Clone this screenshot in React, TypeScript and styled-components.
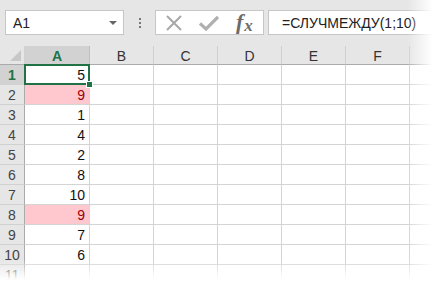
import { createGlobalStyle, styled } from 'styled-components';

const GlobalStyle = createGlobalStyle`
  html, body {
    margin: 0;
    padding: 0;
    background: #ffffff;
  }
  body {
    font-family: 'Liberation Sans', Arial, sans-serif;
  }
`;

const GREEN = '#217346';
const GRID = '#d4d4d4';

const values = [5, 9, 1, 4, 2, 8, 10, 9, 7, 6];
const dupes = [2, 8];
const columns = ['A', 'B', 'C', 'D', 'E', 'F'];

export default function App() {
  return (
    <>
      <GlobalStyle />
      <Window>
        <FormulaBar>
          <NameBox>
            <span>A1</span>
            <Caret />
          </NameBox>
          <Grip>
            <i />
            <i />
            <i />
          </Grip>
          <ButtonsBox>
            <svg width="18" height="16" viewBox="0 0 18 16">
              <path d="M2 1 L16 15 M16 1 L2 15" stroke="#a8a8a8" strokeWidth="2" fill="none" />
            </svg>
            <svg width="20" height="16" viewBox="0 0 20 16">
              <path d="M1 8.5 L7 14 L19 2" stroke="#b0b0b0" strokeWidth="3.2" fill="none" />
            </svg>
            <Fx>
              f<span>x</span>
            </Fx>
          </ButtonsBox>
          <FormulaInput>=СЛУЧМЕЖДУ(1;10)</FormulaInput>
        </FormulaBar>

        <Sheet>
          <Corner />
          {columns.map((c) => (
            <ColHead key={c} $active={c === 'A'}>
              {c}
            </ColHead>
          ))}
          <ColHead $active={false} />

          {Array.from({ length: 11 }).map((_, i) => {
            const row = i + 1;
            const v = values[i];
            return (
              <Row key={row}>
                <RowHead $active={row === 1}>{row}</RowHead>
                <Cell $bad={dupes.includes(row)} $selected={row === 1}>
                  {v}
                </Cell>
                {columns.slice(1).map((c) => (
                  <Cell key={c} />
                ))}
                <Cell />
              </Row>
            );
          })}
        </Sheet>

        <FadeRight />
        <FadeBottom />
      </Window>
    </>
  );
}

const Window = styled.div`
  position: relative;
  width: 437px;
  height: 282px;
  overflow: hidden;
  background: #ffffff;
`;

const FormulaBar = styled.div`
  height: 46px;
  box-sizing: border-box;
  padding: 10px 0 11px 5px;
  background: #e6e6e6;
  display: flex;
  align-items: stretch;
`;

const NameBox = styled.div`
  width: 119px;
  box-sizing: border-box;
  background: #fff;
  border: 1px solid #c6c6c6;
  display: flex;
  align-items: center;
  justify-content: space-between;
  padding: 0 6px 0 7px;
  font-size: 14px;
  color: #222;
`;

const Caret = styled.span`
  width: 0;
  height: 0;
  border-left: 4px solid transparent;
  border-right: 4px solid transparent;
  border-top: 4px solid #666;
`;

const Grip = styled.div`
  width: 31px;
  display: flex;
  flex-direction: column;
  align-items: center;
  justify-content: center;
  gap: 2px;

  i {
    width: 2px;
    height: 2px;
    background: #777;
  }
`;

const ButtonsBox = styled.div`
  width: 109px;
  box-sizing: border-box;
  background: #fff;
  border: 1px solid #c6c6c6;
  display: flex;
  align-items: center;
  padding: 0 0 0 9px;
  gap: 16px;
`;

const Fx = styled.span`
  font-family: 'Liberation Serif', 'Times New Roman', serif;
  font-style: italic;
  font-weight: bold;
  font-size: 22px;
  line-height: 1;
  color: #6b6b6b;
  margin-left: 1px;
  margin-top: -2px;

  span {
    font-size: 17px;
    margin-left: 1px;
    position: relative;
    top: 2px;
  }
`;

const FormulaInput = styled.div`
  flex: 1;
  margin-left: 4px;
  background: #fff;
  border: 1px solid #c6c6c6;
  border-right: none;
  display: flex;
  align-items: center;
  padding-left: 13px;
  font-size: 14px;
  color: #222;
`;

const Sheet = styled.div`
  display: grid;
  grid-template-columns: 25px 65px repeat(5, 64px) 1fr;
  grid-template-rows: 19px repeat(11, 20px);
  background: #fff;
`;

const Row = styled.div`
  display: contents;
`;

const Corner = styled.div`
  background: #e6e6e6;
  border-right: 1px solid #d0d0d0;
  border-bottom: 1px solid #ababab;
  position: relative;

  &::after {
    content: '';
    position: absolute;
    right: 3px;
    bottom: 3px;
    border-left: 11px solid transparent;
    border-bottom: 11px solid #c8c8c8;
  }
`;

const ColHead = styled.div<{ $active: boolean }>`
  box-sizing: border-box;
  background: ${({ $active }) => ($active ? '#d2d2d2' : '#e6e6e6')};
  border-right: 1px solid ${({ $active }) => ($active ? '#c0c0c0' : '#d0d0d0')};
  border-bottom: 1px solid ${({ $active }) => ($active ? GREEN : '#ababab')};
  color: ${({ $active }) => ($active ? GREEN : '#333')};
  font-weight: ${({ $active }) => ($active ? 'bold' : 'normal')};
  font-size: 14px;
  display: flex;
  align-items: center;
  justify-content: center;
  padding-top: 1px;
`;

const RowHead = styled.div<{ $active: boolean }>`
  box-sizing: border-box;
  background: ${({ $active }) => ($active ? '#d2d2d2' : '#e6e6e6')};
  border-right: 1px solid ${({ $active }) => ($active ? GREEN : '#ababab')};
  border-bottom: 1px solid #d0d0d0;
  color: ${({ $active }) => ($active ? GREEN : '#444')};
  font-weight: ${({ $active }) => ($active ? 'bold' : 'normal')};
  font-size: 14px;
  display: flex;
  align-items: center;
  justify-content: center;
`;

const Cell = styled.div<{ $bad?: boolean; $selected?: boolean }>`
  position: relative;
  box-sizing: border-box;
  border-right: 1px solid ${GRID};
  border-bottom: 1px solid ${GRID};
  background: ${({ $bad }) => ($bad ? '#ffc7ce' : '#fff')};
  color: ${({ $bad }) => ($bad ? '#9c0006' : '#111')};
  font-size: 14px;
  display: flex;
  align-items: center;
  justify-content: flex-end;
  padding-right: 4px;

  ${({ $selected }) =>
    $selected &&
    `
    &::before {
      content: '';
      position: absolute;
      left: -1px;
      top: -1px;
      right: -1px;
      bottom: -1px;
      border: 2px solid ${GREEN};
    }
    &::after {
      content: '';
      position: absolute;
      right: -4px;
      bottom: -4px;
      width: 5px;
      height: 5px;
      background: ${GREEN};
      border: 1px solid #fff;
      z-index: 1;
    }
  `}
`;

const FadeRight = styled.div`
  position: absolute;
  top: 0;
  right: 0;
  width: 30px;
  height: 100%;
  background: linear-gradient(to right, rgba(255, 255, 255, 0), #fff 85%);
  pointer-events: none;
`;

const FadeBottom = styled.div`
  position: absolute;
  left: 0;
  bottom: 0;
  width: 100%;
  height: 22px;
  background: linear-gradient(to bottom, rgba(255, 255, 255, 0), #fff 90%);
  pointer-events: none;
`;
